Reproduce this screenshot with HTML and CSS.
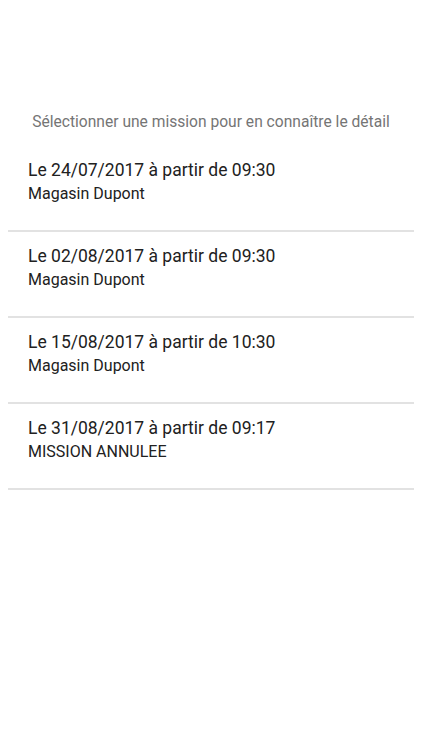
FILE: index.html
```html
<!doctype html>
<html lang="fr">
<head>
	<meta charset="UTF-8">
	<title>Missions</title>
	<link rel="stylesheet" href="styles.css">
</head>
<body>
<!--liste des missions-->
<section id="missions">
	<p class="missions_info">Sélectionner une mission pour en connaître le détail</p>
	<ul class="missions_list">
		<li class="mission_item">
			<div class="mission_date">Le 24/07/2017 à partir de 09:30</div>
			<div class="mission_place">Magasin Dupont</div>
		</li>
		<li class="mission_item">
			<div class="mission_date">Le 02/08/2017 à partir de 09:30</div>
			<div class="mission_place">Magasin Dupont</div>
		</li>
		<li class="mission_item">
			<div class="mission_date">Le 15/08/2017 à partir de 10:30</div>
			<div class="mission_place">Magasin Dupont</div>
		</li>
		<li class="mission_item">
			<div class="mission_date">Le 31/08/2017 à partir de 09:17</div>
			<div class="mission_place">MISSION ANNULEE</div>
		</li>
	</ul>
</section>
</body>
</html>
```

FILE: styles.css
```css
	*{margin:0;padding:0}
	body{
		margin:8px;
		background-color:#fff;
		font-family:Roboto,"Noto Sans",sans-serif;
	}
	#missions{
		padding-top:104px;
	}
	p.missions_info{
		height:20px;
		line-height:20px;
		margin-bottom:14px;
		text-align:center;
		font-size:15.6px;
		color:#757575;
	}
	ul.missions_list{
		list-style:none;
	}
	li.mission_item{
		padding:12px 20px 24px;
		border-bottom:2px solid #e2e2e2;
		color:#212121;
	}
	div.mission_date{
		font-size:17.5px;
		line-height:24px;
	}
	div.mission_place{
		font-size:16px;
		line-height:24px;
	}
```
